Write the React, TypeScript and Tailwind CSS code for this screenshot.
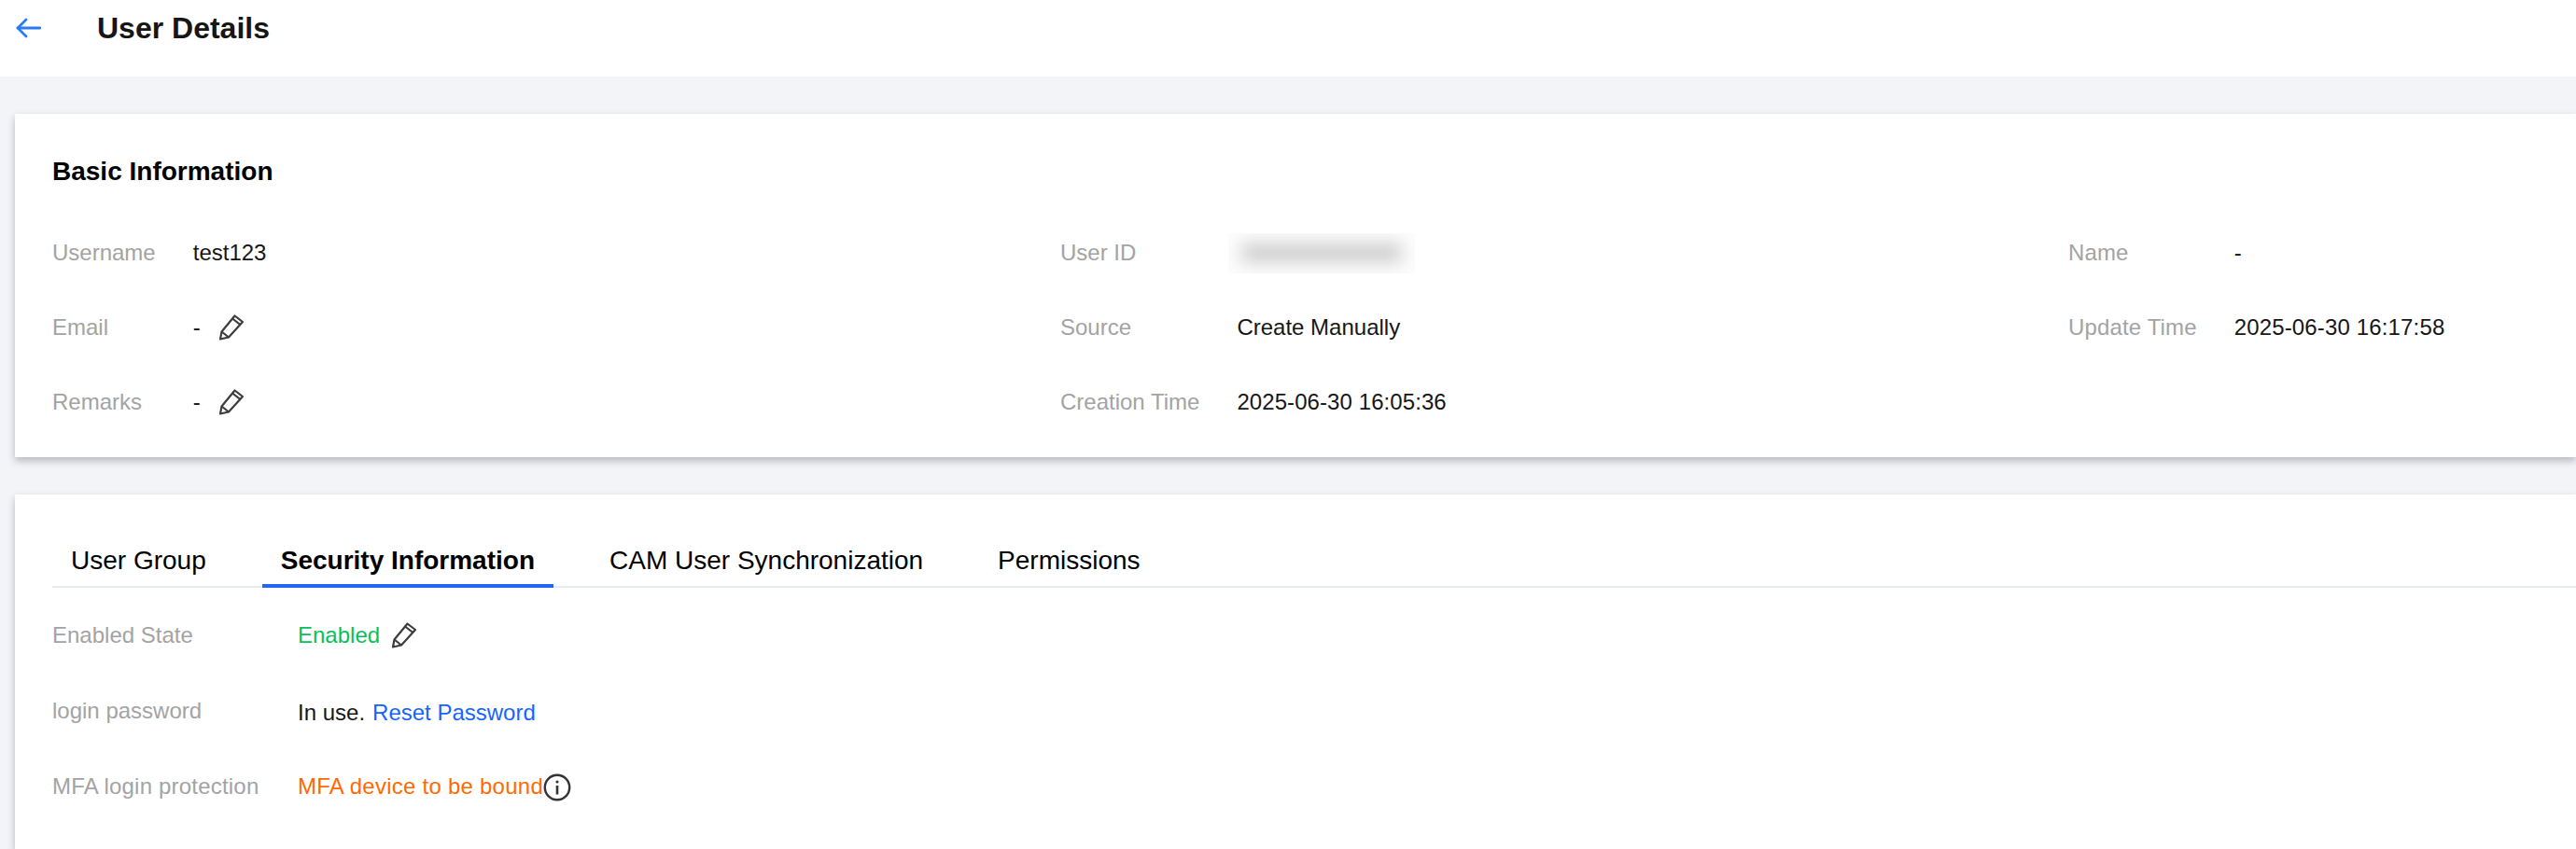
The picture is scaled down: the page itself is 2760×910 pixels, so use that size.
import type { ReactNode } from 'react';

function PencilIcon() {
  return (
    <svg width="28" height="28" viewBox="0 0 28 28" fill="none" stroke="#3d3d3d" strokeWidth="2.2" strokeLinejoin="round" className="shrink-0">
      <path d="M2 26.5 L3.5 18.5 L17.5 1.5 L26 8 L11 24.5 Z" />
      <path d="M15 4.5 L23.5 11" />
      <path d="M3.5 18.5 L11 24.5" />
    </svg>
  );
}

function InfoIcon() {
  return (
    <svg width="30" height="30" viewBox="0 0 30 30" fill="none" className="mt-[3px] shrink-0">
      <circle cx="15" cy="15" r="13.2" stroke="#333" strokeWidth="2.4" />
      <circle cx="15" cy="9" r="1.6" fill="#333" />
      <path d="M15 13 V22.5" stroke="#333" strokeWidth="2.6" />
    </svg>
  );
}

function BackArrow() {
  return (
    <svg width="28" height="24" viewBox="0 0 28 24" fill="none" stroke="#2c7bf6" strokeWidth="2.8" strokeLinecap="round" strokeLinejoin="round">
      <path d="M27 12 H3" />
      <path d="M12 3 L3 12 L12 21" />
    </svg>
  );
}

function Label({ children }: { children: ReactNode }) {
  return <span className="text-[#a3a3a3]">{children}</span>;
}

function DashEditable() {
  return (
    <span className="flex items-center gap-[19px]">
      -
      <PencilIcon />
    </span>
  );
}

const TABS = ['User Group', 'Security Information', 'CAM User Synchronization', 'Permissions'];

export default function App() {
  return (
    <div className="flex flex-col h-[910px] overflow-hidden bg-[#f3f4f7] font-['Liberation_Sans',Arial,sans-serif] text-[#161616]">
      <header className="bg-white h-[82px] shrink-0 flex items-start pt-4">
        <span className="ml-[16px] mt-[2px]">
          <BackArrow />
        </span>
        <h1 className="ml-[60px] text-[32px] leading-[28px] font-bold">User Details</h1>
      </header>

      <section className="ml-4 mt-10 h-[368px] shrink-0 bg-white px-10 shadow-[0_4px_8px_0_rgba(54,58,80,0.32)]">
        <h2 className="pt-[42px] mb-[27px] text-[28px] leading-[40px] font-bold text-black">Basic Information</h2>
        <div className="grid grid-cols-[1080px_1080px_1fr] text-[24px]">
          <div className="grid grid-cols-[auto_1fr] auto-rows-[80px] items-center gap-x-10">
            <Label>Username</Label>
            <span>test123</span>
            <Label>Email</Label>
            <DashEditable />
            <Label>Remarks</Label>
            <DashEditable />
          </div>
          <div className="grid grid-cols-[auto_1fr] auto-rows-[80px] items-center gap-x-10">
            <Label>User ID</Label>
            <div className="-ml-[9px] flex h-[43px] w-[200px] items-center justify-center overflow-hidden bg-[#fcfcfc]">
              <div className="h-[20px] w-[170px] bg-[#cdcdcd] blur-[9px]" />
            </div>
            <Label>Source</Label>
            <span>Create Manually</span>
            <Label>Creation Time</Label>
            <span className="tracking-[0.08px]">2025-06-30 16:05:36</span>
          </div>
          <div className="grid grid-cols-[auto_1fr] auto-rows-[80px] items-center gap-x-10 tracking-[0.15px]">
            <Label>Name</Label>
            <span>-</span>
            <Label>Update Time</Label>
            <span>2025-06-30 16:17:58</span>
          </div>
        </div>
      </section>

      <section className="ml-4 mt-10 flex-1 bg-white pl-10 pt-[42px] shadow-[0_4px_8px_0_rgba(54,58,80,0.32)]">
        <div className="flex gap-10 border-b-2 border-[#e7eaef]">
          {TABS.map((tab) => (
            <div
              key={tab}
              className={
                tab === 'Security Information'
                  ? '-mb-[2px] h-[58px] border-b-4 border-[#2468f2] px-5 text-[28px] leading-[58px] font-bold text-black'
                  : 'h-[56px] px-5 text-[28px] leading-[58px] text-black'
              }
            >
              {tab}
            </div>
          ))}
        </div>
        <div className="mt-[10px] grid grid-cols-[223px_1fr] auto-rows-[81px] items-center gap-x-10 text-[24px]">
          <Label>Enabled State</Label>
          <span className="flex items-center gap-3">
            <span className="text-[#0abf5b]">Enabled</span>
            <PencilIcon />
          </span>
          <Label>login password</Label>
          <span className="mt-1 flex gap-2">
            In use.
            <span className="text-[#1664ff]">Reset Password</span>
          </span>
          <span className="text-[#a3a3a3] tracking-[0.2px]">MFA login protection</span>
          <span className="flex items-center text-[#ff6a00] tracking-[0.25px]">
            MFA device to be bound
            <InfoIcon />
          </span>
        </div>
      </section>
    </div>
  );
}
